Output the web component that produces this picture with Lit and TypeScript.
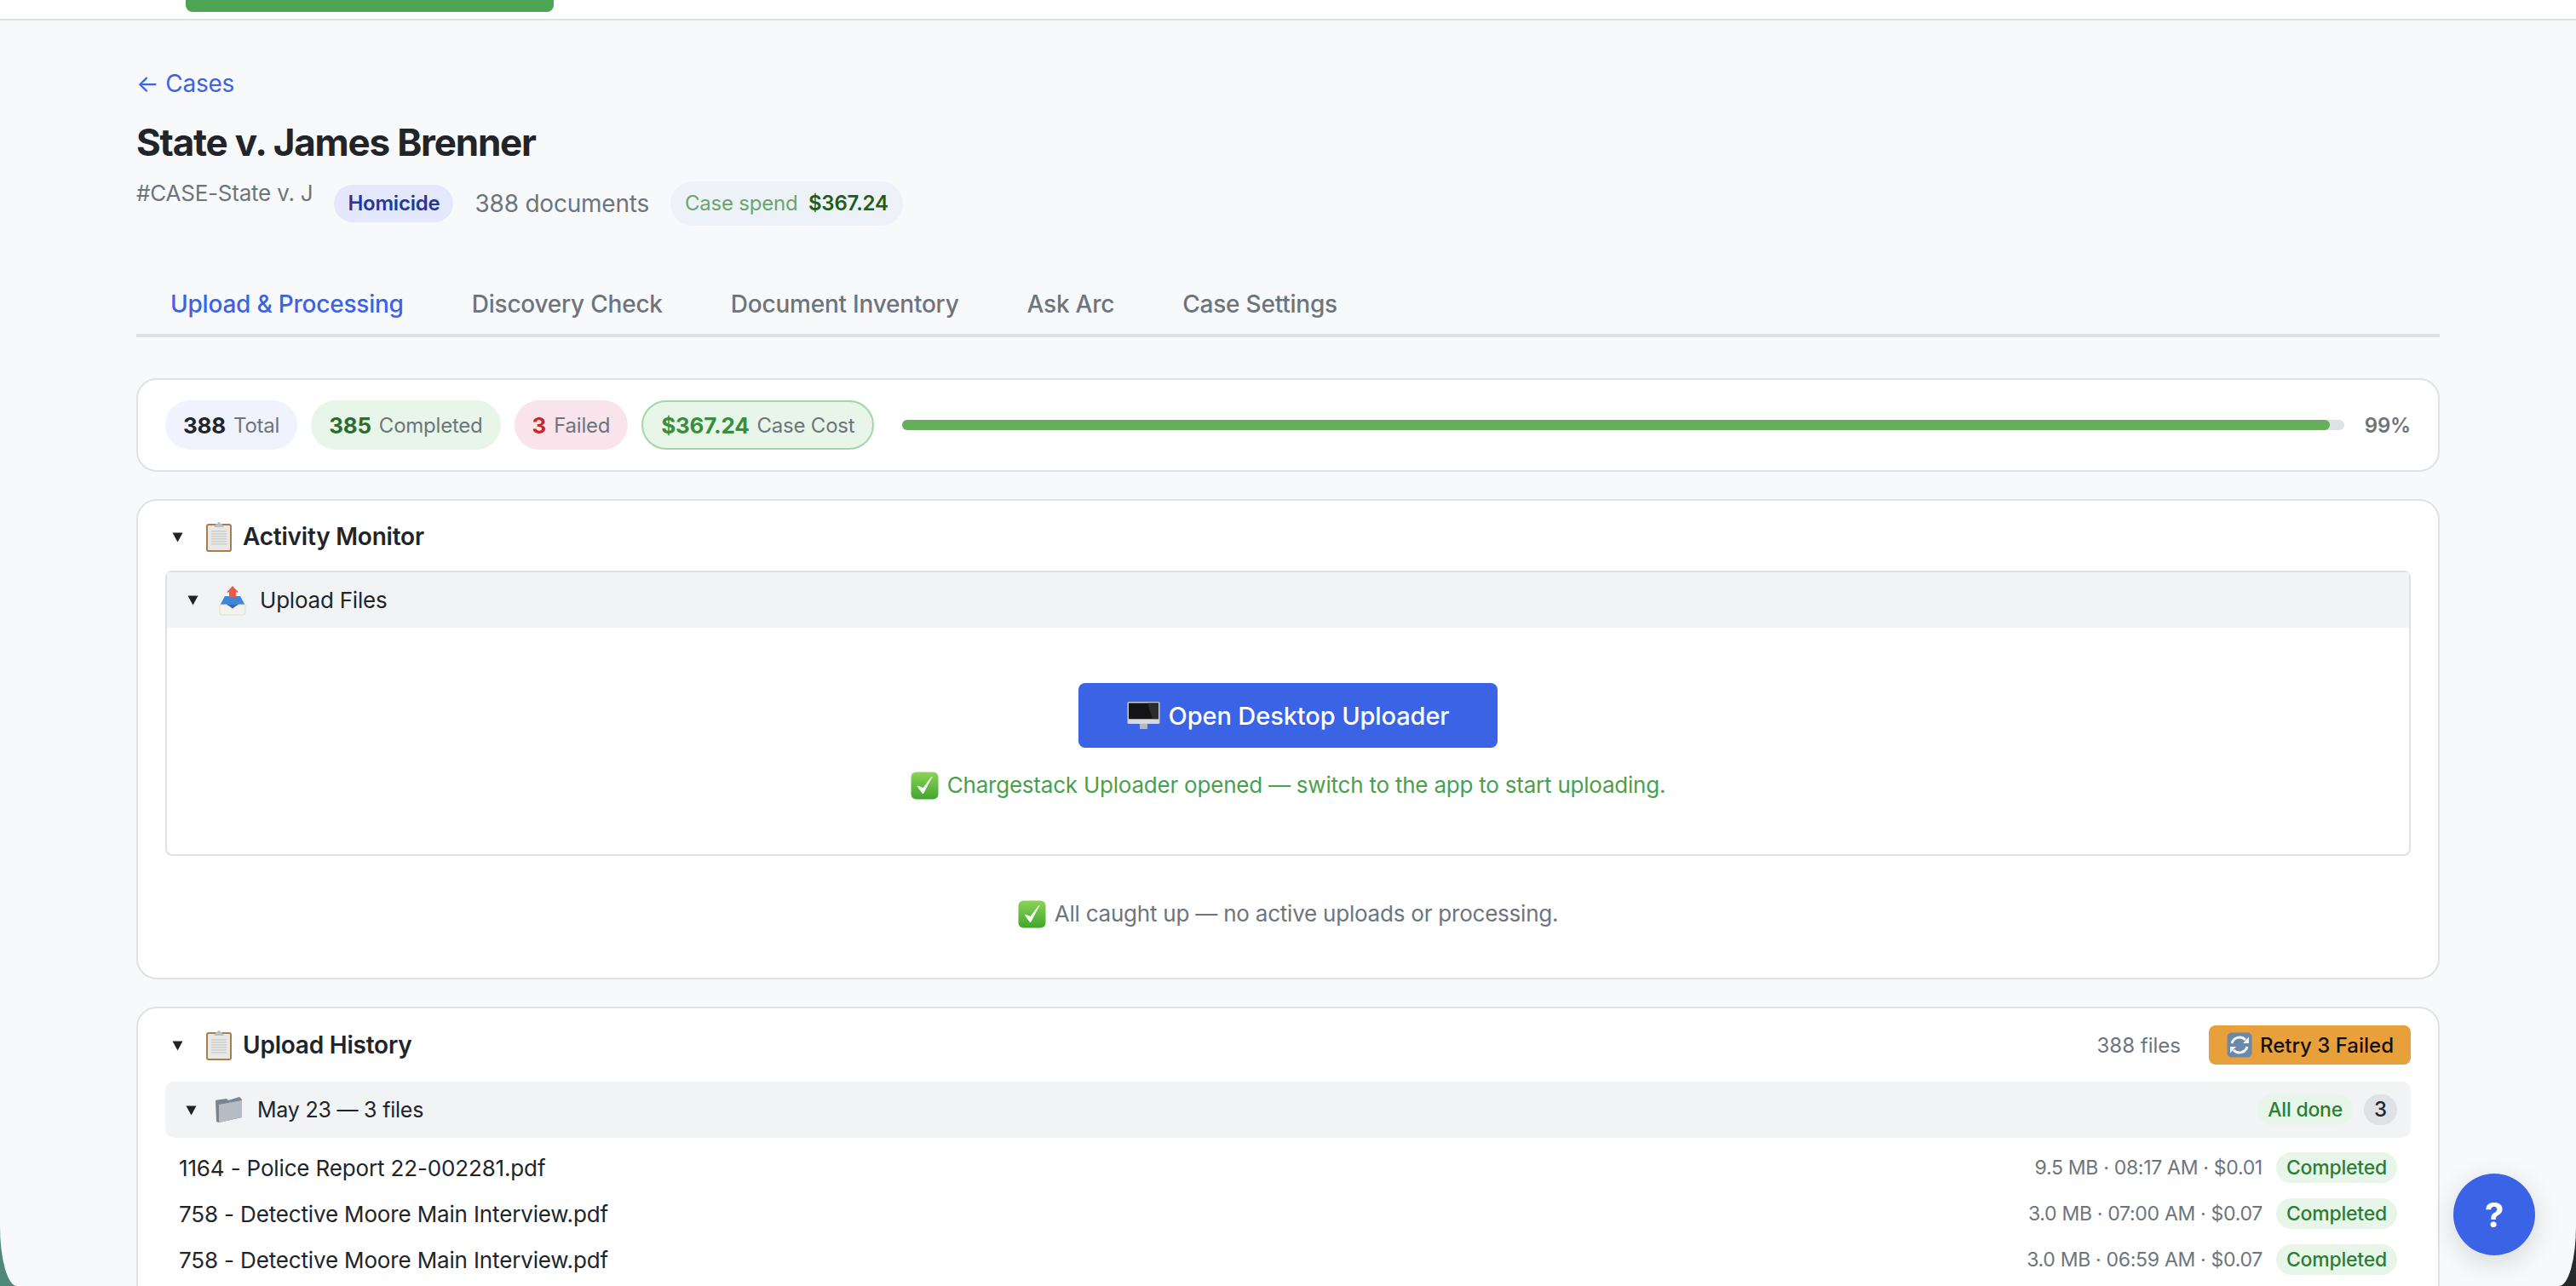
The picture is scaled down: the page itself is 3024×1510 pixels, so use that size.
import { LitElement, css, html, svg } from "lit";
import { customElement } from "lit/decorators.js";

/* Small drawn glyphs: the sandbox has no colour emoji font */
const caret = (size: number) => html`<svg class="caret" width=${size} height=${size} viewBox="0 0 13 13"><path d="M0.5 1.5 H12.5 L6.5 12.5 Z" fill="#1f2328" /></svg>`;

const clipboard = html`<svg class="emoji" width="34" height="36" viewBox="0 0 34 36">
  <rect x="2" y="3" width="30" height="33" rx="3" fill="#a87f4c" />
  <rect x="4" y="5" width="26" height="29" rx="1" fill="#e8e8e6" />
  ${[11, 14, 17, 20, 23, 26].map((y) => svg`<rect x="8" y=${y} width="18" height="1.6" fill="#cfcfcd" />`)}
  <path d="M11 7 L14 3 H15 A2 2 0 0 1 19 3 H20 L23 7 Z" fill="#b9bfc6" />
</svg>`;

const tray = html`<svg class="emoji" width="36" height="36" viewBox="0 0 36 36">
  <path d="M9 13 H27 L33 24 H3 Z" fill="#3f86d6" />
  <path d="M3 23 H11 L18 28 L25 23 H33 V33 A2 2 0 0 1 31 35 H5 A2 2 0 0 1 3 33 Z" fill="#f4f2ec" stroke="#dfddd5" />
  <path d="M12 23 H24 L18 27.5 Z" fill="#2b6bb8" />
  <path d="M18 1 L25 8.5 H22 V14 H14 V8.5 H11 Z" fill="#ea5a47" />
</svg>`;

const monitor = html`<svg class="emoji" width="39" height="34" viewBox="0 0 39 34">
  <rect x="0.5" y="1" width="38" height="26" rx="1.5" fill="#c9ccd0" />
  <rect x="2" y="2.5" width="35" height="19" fill="#141414" />
  <path d="M24 2.5 H37 V21.5 H30 Z" fill="#2c2c2c" />
  <rect x="2" y="21.5" width="35" height="5" fill="#d8dadd" />
  <rect x="15" y="27" width="9" height="6" fill="#b4b7bb" />
</svg>`;

const check = html`<svg class="emoji" width="33" height="33" viewBox="0 0 33 33">
  <defs><linearGradient id="chk" x1="0" y1="0" x2="0" y2="1"><stop offset="0" stop-color="#8bd456" /><stop offset="1" stop-color="#41a62d" /></linearGradient></defs>
  <rect x="0.5" y="0.5" width="32" height="32" rx="6" fill="url(#chk)" />
  <path d="M8 17 L14.5 26 L25 6 L14.8 19.5 Z" fill="#fff" stroke="#fff" stroke-width="1" stroke-linejoin="round" />
</svg>`;

const refresh = html`<svg class="emoji" width="30" height="30" viewBox="0 0 30 30">
  <rect x="0.5" y="0.5" width="29" height="29" rx="5" fill="#6b88a9" />
  <path d="M6 13 A9.5 9.5 0 0 1 22 9" fill="none" stroke="#f2f5f8" stroke-width="3" />
  <path d="M19 13 H26 V5.5 Z" fill="#f2f5f8" />
  <path d="M24 17 A9.5 9.5 0 0 1 8 21" fill="none" stroke="#f2f5f8" stroke-width="3" />
  <path d="M11 17 H4 V24.5 Z" fill="#f2f5f8" />
</svg>`;

const folder = html`<svg class="emoji" width="34" height="34" viewBox="0 0 34 34">
  <path d="M1 6 L14 4 L16 6 L29 2 L32 5 V26 L5 32 L2 31 Z" fill="#78858f" />
  <path d="M5 11 L32 6 V26 L5 32 Z" fill="#b5bcc4" />
</svg>`;

const files = [
  { name: "1164 - Police Report 22-002281.pdf", meta: "9.5 MB · 08:17 AM · $0.01" },
  { name: "758 - Detective Moore Main Interview.pdf", meta: "3.0 MB · 07:00 AM · $0.07" },
  { name: "758 - Detective Moore Main Interview.pdf", meta: "3.0 MB · 06:59 AM · $0.07" },
];

const tabs = ["Upload & Processing", "Discovery Check", "Document Inventory", "Ask Arc", "Case Settings"];

@customElement("app-root")
export class AppRoot extends LitElement {
  override render() {
    return html`
      <div class="window">
        <header class="topbar"><div class="top-btn"></div></header>

        <main class="content">
          <a class="back">← Cases</a>
          <h1>State v. James Brenner</h1>
          <div class="meta">
            <span class="case-id">#CASE-State v. J</span>
            <span class="type">Homicide</span>
            <span class="docs">388 documents</span>
            <span class="spend">Case spend <b>$367.24</b></span>
          </div>

          <nav class="tabs">
            ${tabs.map((t, i) => html`<span class=${i === 0 ? "tab active" : "tab"}>${t}</span>`)}
          </nav>

          <section class="card summary">
            <span class="pill total"><b>388</b> Total</span>
            <span class="pill done"><b>385</b> Completed</span>
            <span class="pill failed"><b>3</b> Failed</span>
            <span class="pill cost"><b>$367.24</b> Case Cost</span>
            <div class="track"><div class="fill" style="width: 99%"></div></div>
            <span class="pct">99%</span>
          </section>

          <section class="card activity">
            <div class="card-head">
              ${caret(13)} ${clipboard}
              <span class="card-title">Activity Monitor</span>
            </div>
            <div class="panel">
              <div class="panel-head">${caret(13)} ${tray}<span>Upload Files</span></div>
              <div class="panel-body">
                <button class="primary">${monitor}<span>Open Desktop Uploader</span></button>
                <p class="opened">${check}<span>Chargestack Uploader opened — switch to the app to start uploading.</span></p>
              </div>
            </div>
            <p class="idle">${check}<span>All caught up — no active uploads or processing.</span></p>
          </section>

          <section class="card history">
            <div class="card-head">
              ${caret(13)} ${clipboard}
              <span class="card-title">Upload History</span>
              <span class="count">388 files</span>
              <button class="retry">${refresh}<span>Retry 3 Failed</span></button>
            </div>
            <div class="group">
              ${caret(13)} ${folder}
              <span class="group-name">May 23 — 3 files</span>
              <span class="badge">All done</span>
              <span class="num">3</span>
            </div>
            ${files.map(
              (f) => html`<div class="file">
                <span class="file-name">${f.name}</span>
                <span class="file-meta">${f.meta}</span>
                <span class="badge">Completed</span>
              </div>`
            )}
          </section>
        </main>

        <button class="help">?</button>
      </div>
    `;
  }

  static override styles = css`
    :host {
      display: block;
      font-family: Inter, "Liberation Sans", sans-serif;
      letter-spacing: -0.22px;
      color: #212529;
      background: linear-gradient(to right, #4f8a78 50%, #262a28 50%);
    }

    * {
      box-sizing: border-box;
    }

    .window {
      position: relative;
      height: 1510px;
      overflow: hidden;
      background: #f8f9fa;
      border-bottom-left-radius: 20px 70px;
      border-bottom-right-radius: 20px 70px;
    }

    .topbar {
      height: 24px;
      padding-left: 218px;
      background: #fff;
      border-bottom: 2px solid #dee2e6;
    }

    .top-btn {
      width: 432px;
      height: 14px;
      background: #4ca455;
      border-radius: 0 0 8px 8px;
    }

    .content {
      padding: 56px 160px 0;
    }

    .back {
      display: block;
      font-size: 28px;
      line-height: 36px;
      color: #3b63e6;
    }

    h1 {
      margin: 23px 0 0;
      font-size: 44px;
      line-height: 56px;
      font-weight: 700;
      letter-spacing: -1.2px;
    }

    .meta {
      display: flex;
      align-items: center;
      gap: 25px;
      margin-top: 18px;
      height: 52px;
    }

    .case-id {
      align-self: flex-start;
      font-size: 26px;
      line-height: 28px;
      color: #6c757d;
    }

    .type {
      padding: 0 16px;
      line-height: 44px;
      font-size: 24px;
      font-weight: 600;
      color: #283593;
      background: #e3e8fd;
      border-radius: 22px;
    }

    .docs {
      font-size: 28px;
      color: #6c757d;
    }

    .spend {
      padding: 0 17px;
      line-height: 52px;
      font-size: 24px;
      color: #6aa56e;
      background: #edf1f8;
      border-radius: 26px;
    }

    .spend b {
      margin-left: 6px;
      font-weight: 600;
      color: #1b5e20;
    }

    .tabs {
      display: flex;
      margin-top: 57px;
      border-bottom: 4px solid #dee2e6;
    }

    .tab {
      padding: 18px 40px;
      font-size: 28px;
      line-height: 34px;
      font-weight: 500;
      color: #6c757d;
    }

    .tab.active {
      color: #3b63e6;
    }

    .card {
      background: #fff;
      border: 2px solid #dee2e6;
      border-radius: 24px;
      padding: 0 32px;
    }

    .summary {
      display: flex;
      align-items: center;
      gap: 16px;
      margin-top: 48px;
      padding-top: 24px;
      padding-bottom: 24px;
    }

    .pill {
      display: flex;
      align-items: center;
      gap: 9px;
      height: 58px;
      padding: 0 21px;
      border-radius: 29px;
      font-size: 24px;
      color: #6c757d;
      white-space: nowrap;
    }

    .pill b {
      font-size: 26px;
      font-weight: 700;
    }

    .total {
      background: #f0f3fe;
    }

    .total b {
      color: #212529;
    }

    .done,
    .cost {
      background: #e8f5e9;
    }

    .done b {
      color: #2e6b30;
    }

    .failed {
      background: #f8e4ea;
    }

    .failed b {
      color: #c62828;
    }

    .cost {
      border: 2px solid #a5d6a7;
    }

    .cost b {
      color: #388e3c;
    }

    .track {
      flex: 1;
      height: 12px;
      margin-left: 17px;
      background: #dee2e6;
      border-radius: 6px;
    }

    .fill {
      height: 100%;
      background: #66ad5c;
      border-radius: 6px;
    }

    .pct {
      margin-left: 8px;
      font-size: 24px;
      font-weight: 600;
      color: #6c757d;
    }

    .activity {
      margin-top: 32px;
      padding-top: 24px;
      height: 564px;
    }

    .card-head {
      display: flex;
      align-items: center;
      height: 36px;
    }

    .card-head .caret {
      margin: 0 25px 0 8px;
    }

    .card-head > .emoji {
      margin-right: 11px;
    }

    .card-title {
      font-size: 28px;
      font-weight: 600;
      color: #212529;
    }

    .panel {
      margin-top: 22px;
      border: 2px solid #dee2e6;
      border-radius: 8px;
    }

    .panel-head {
      display: flex;
      align-items: center;
      height: 65px;
      padding-left: 24px;
      font-size: 26px;
      background: #f1f3f5;
    }

    .panel-head .caret {
      margin-right: 22px;
    }

    .panel-head .emoji {
      margin-right: 14px;
    }

    .panel-body {
      display: flex;
      flex-direction: column;
      align-items: center;
      padding: 65px 0 63px;
    }

    .primary {
      display: flex;
      align-items: center;
      justify-content: center;
      gap: 10px;
      width: 492px;
      height: 76px;
      border: 0;
      border-radius: 8px;
      font: 500 29px Inter, sans-serif;
      letter-spacing: -0.1px;
      color: #fff;
      background: #3b63e6;
    }

    .opened,
    .idle {
      display: flex;
      align-items: center;
      justify-content: center;
      gap: 10px;
      margin: 26px 0 0;
      line-height: 36px;
      font-size: 26px;
      color: #4a9f4e;
    }

    .idle {
      margin-top: 50px;
      color: #6c757d;
    }

    .history {
      margin-top: 32px;
      padding-top: 20px;
      height: 400px;
    }

    .history .card-head {
      height: 46px;
    }

    .count {
      margin-left: auto;
      font-size: 24px;
      letter-spacing: 0;
      color: #6c757d;
    }

    .retry {
      display: flex;
      align-items: center;
      gap: 9px;
      height: 46px;
      margin-left: 33px;
      padding: 0 20px 0 21px;
      border: 0;
      border-radius: 8px;
      font: 500 24px Inter, sans-serif;
      color: #111;
      background: #e8a03a;
    }

    .group {
      display: flex;
      align-items: center;
      height: 66px;
      margin-top: 20px;
      padding: 0 16px 0 24px;
      background: #f1f3f5;
      border-radius: 10px;
    }

    .group .caret {
      margin-right: 21px;
    }

    .group .emoji {
      margin-right: 16px;
    }

    .group-name {
      flex: 1;
      font-size: 25px;
    }

    .badge {
      padding: 0 12px;
      line-height: 36px;
      font-size: 23px;
      font-weight: 500;
      color: #2e7d32;
      background: #e8f5e9;
      border-radius: 18px;
    }

    .num {
      margin-left: 13px;
      width: 39px;
      line-height: 36px;
      text-align: center;
      font-size: 24px;
      font-weight: 500;
      background: #dee2e6;
      border-radius: 18px;
    }

    .file {
      display: flex;
      align-items: center;
      height: 54px;
      padding: 0 16px;
    }

    .group + .file {
      margin-top: 8px;
    }

    .file-name {
      flex: 1;
      font-size: 26px;
      letter-spacing: -0.15px;
    }

    .file-meta {
      margin-right: 16px;
      font-size: 23px;
      letter-spacing: -0.3px;
      color: #6c757d;
    }

    .help {
      position: absolute;
      right: 48px;
      bottom: 36px;
      width: 96px;
      height: 96px;
      border: 0;
      border-radius: 50%;
      font: 700 40px Inter, sans-serif;
      color: #fff;
      background: #3b63e6;
      box-shadow: 0 8px 32px rgba(0, 0, 0, 0.14);
    }
  `;
}

declare global {
  interface HTMLElementTagNameMap {
    "app-root": AppRoot;
  }
}
